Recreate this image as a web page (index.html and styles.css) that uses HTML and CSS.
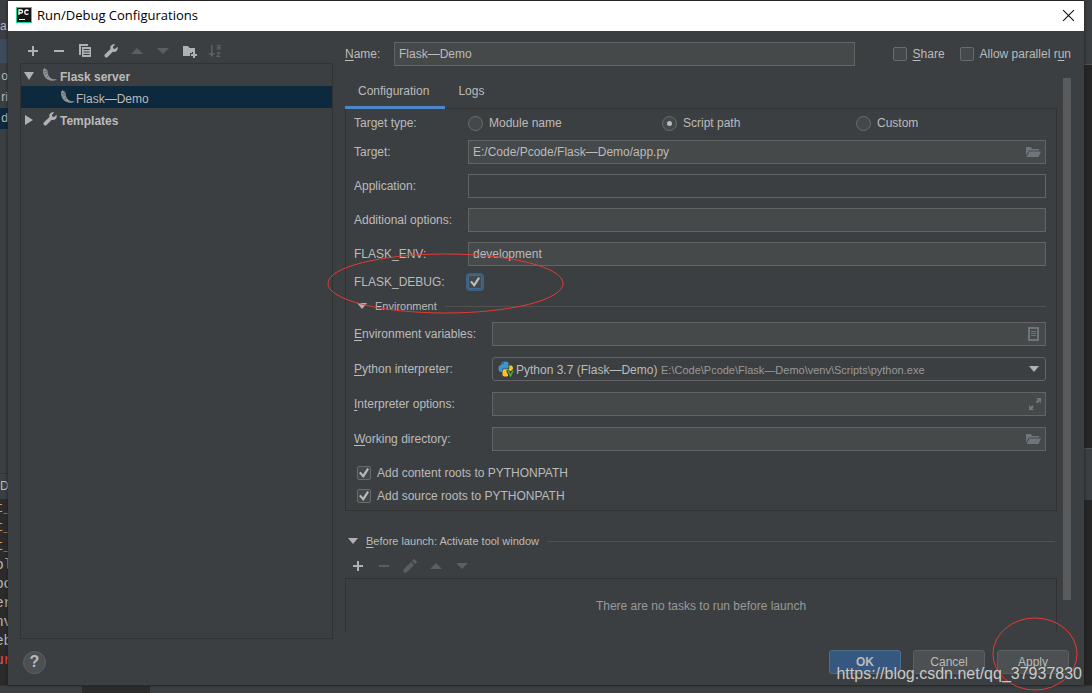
FILE: index.html
```html
<!DOCTYPE html>
<html lang="en">
<head>
<meta charset="utf-8">
<title>Run/Debug Configurations</title>
<link rel="stylesheet" href="styles.css">
</head>
<body>
<svg class="defs" aria-hidden="true">
  <defs>
    <symbol id="plus" viewBox="0 0 16 16"><path d="M7 3h2v4h4v2H9v4H7V9H3V7h4z" fill="currentColor"/></symbol>
    <symbol id="minus" viewBox="0 0 16 16"><path d="M3 7h10v2H3z" fill="currentColor"/></symbol>
    <symbol id="copy" viewBox="0 0 16 16"><path d="M2 1h9v2H4v9H2z" fill="currentColor"/><path fill-rule="evenodd" d="M5 4h9v10H5zM6.500 6v1h6V6zM6.500 8.500v1h6v-1zM6.500 11v1h6v-1z" fill="currentColor"/></symbol>
    <symbol id="wrench" viewBox="0 0 16 16"><path d="M14.400 3.700l-2.300 2.300-1.800-.4-.4-1.700 2.300-2.400c-1.500-.6-3-.2-4 .9-1 1-1.200 2.400-.7 3.700L2 11.300c-.7.700-.7 1.900 0 2.600.7.700 1.900.7 2.600 0L9.800 8.700c1.300.5 2.800.2 3.800-.8 1.200-1.100 1.500-2.800.8-4.200z" fill="currentColor"/></symbol>
    <symbol id="up" viewBox="0 0 16 16"><path d="M2 11l6-6 6 6z" fill="currentColor"/></symbol>
    <symbol id="down" viewBox="0 0 16 16"><path d="M2 5l6 6 6-6z" fill="currentColor"/></symbol>
    <symbol id="folder-plus" viewBox="0 0 16 16"><path d="M2 3h5l1.500 2H14v4h-3v1H9v3H2zM12 9h2v2h2v2h-2v2h-2v-2h-2v-2h2z" fill="currentColor"/></symbol>
    <symbol id="folder" viewBox="0 0 16 16"><path d="M1 3h5l1 2h7v1.500H4L1 11.500zM4.500 7.500H16L13.500 13H1.500z" fill="currentColor"/></symbol>
    <symbol id="horn" viewBox="0 0 16 16"><path d="M1.500 2C.6 4 1 7.500 3 10.200s6 4.300 9.500 3.300c1-.3 1.800-.5 2.300-1.300-2.300.4-4.800 0-6.500-1.500C6.300 9 5.300 6 5.500 3L4.300 3.500 4.500 1.500 3 2.200V1z" fill="#909395"/><path d="M2 5l2.600-.9M2.500 7.500l2.600-1.300M4.500 10.200l2-1.700" stroke="#3c3f41" stroke-width=".5" fill="none"/></symbol>
    <symbol id="pencil" viewBox="0 0 16 16"><path d="M1.500 14.500v-3L9 4l3 3-7.500 7.500zM10 3l1.700-1.700 1-.1 2.200 2.200-.1 1L13 6z" fill="currentColor"/></symbol>
    <symbol id="open" viewBox="0 0 10 6"><path d="M0 0h10L5 6z" fill="currentColor"/></symbol>
  </defs>
</svg>

<div class="backdrop" aria-hidden="true">
  <div class="strip strip-left">
    <div class="edge-toolbar">a</div>
    <div class="edge-tab"></div>
    <div class="edge-tree"><span>o</span><span>ri</span><span class="edge-selected">d</span></div>
    <div class="edge-run">D</div>
    <div class="edge-console"><span class="sand">t_</span><span class="sand">t_</span><span class="sand">t_</span><span>ol</span><span>oc</span><span>er</span><span>nv</span><span>eb</span><span class="error">ur</span></div>
  </div>
  <div class="strip strip-right">
    <div class="edge-bars"></div>
    <div class="edge-editor"></div>
    <div class="edge-head"></div>
    <div class="edge-output"></div>
  </div>
  <div class="status"><div class="status-tab"></div></div>
</div>

<div class="dialog" role="dialog" aria-labelledby="dialog-title">
  <header class="titlebar">
    <svg class="logo" viewBox="0 0 16 16"><rect width="16" height="16" fill="#21d789"/><rect x="1" y="1" width="14" height="14" fill="#151515"/><path d="M3 8V3h2q1.500 0 1.500 1.500T5 6H3.200M12.500 3.800Q11.800 3 10.700 3 8.800 3.100 8.800 5.200T10.700 7.400q1.100 0 1.800-.8" fill="none" stroke="#fff" stroke-width="1.300"/><path d="M3 12h6v1H3z" fill="#fff"/></svg>
    <h1 id="dialog-title">Run/Debug Configurations</h1>
    <button class="close" aria-label="Close"><svg viewBox="0 0 12 12"><path d="M1 1l10 10M11 1L1 11" stroke="#111" stroke-width="1"/></svg></button>
  </header>

  <main class="main">
    <section class="sidebar">
      <div class="toolbar">
        <button aria-label="Add"><svg><use href="#plus"/></svg></button>
        <button aria-label="Remove"><svg><use href="#minus"/></svg></button>
        <button aria-label="Copy"><svg><use href="#copy"/></svg></button>
        <button aria-label="Edit templates"><svg><use href="#wrench"/></svg></button>
        <button aria-label="Move up" disabled><svg><use href="#up"/></svg></button>
        <button aria-label="Move down" disabled><svg><use href="#down"/></svg></button>
        <button aria-label="New folder"><svg><use href="#folder-plus"/></svg></button>
        <button aria-label="Sort" disabled><svg viewBox="0 0 16 16"><path d="M4 2h1.500v8H8l-3.200 4L1.500 10H4z" fill="currentColor"/><path d="M10 2.600h3v4.200M13 6.200h-2.600V4.500H13M9.800 9.600h3L10 13.400h3.500" fill="none" stroke="currentColor" stroke-width="1.200"/></svg></button>
      </div>
      <ul class="tree">
        <li class="node"><svg class="twist" viewBox="0 0 10 10"><path d="M0 1h10L5 9z" fill="currentColor"/></svg><svg class="icon"><use href="#horn"/></svg><b>Flask server</b></li>
        <li class="node child selected"><svg class="icon"><use href="#horn"/></svg>Flask—Demo</li>
        <li class="node"><svg class="twist" viewBox="0 0 10 10"><path d="M1 0v10l8-5z" fill="currentColor"/></svg><svg class="icon"><use href="#wrench"/></svg><b>Templates</b></li>
      </ul>
    </section>

    <section class="detail">
      <div class="name-row">
        <label class="name-label" for="name"><u>N</u>ame:</label>
        <input class="field name-field" id="name" type="text" value="Flask—Demo">
        <label class="check share"><input type="checkbox"><span><u>S</u>hare</span></label>
        <label class="check"><input type="checkbox"><span>Allow parallel r<u>u</u>n</span></label>
      </div>

      <div class="scroller">
        <div class="content">
          <div class="tabs" role="tablist">
            <button class="tab active" role="tab" aria-selected="true">Configuration</button>
            <button class="tab" role="tab" aria-selected="false">Logs</button>
          </div>
          <div class="panel">
            <div class="rows">
              <div class="row type-row">
                <span>Target type:</span>
                <div class="radios">
                  <label class="radio"><input type="radio" name="type">Module name</label>
                  <label class="radio"><input type="radio" name="type" checked>Script path</label>
                  <label class="radio"><input type="radio" name="type">Custom</label>
                </div>
              </div>
              <div class="row"><label for="target">Target:</label><div class="field-wrap"><input class="field" id="target" type="text" value="E:/Code/Pcode/Flask—Demo/app.py"><svg class="field-icon"><use href="#folder"/></svg></div></div>
              <div class="row"><label for="application">Application:</label><input class="field plain" id="application" type="text"></div>
              <div class="row"><label for="additional">Additional options:</label><input class="field" id="additional" type="text"></div>
              <div class="row"><label for="env">FLASK_ENV:</label><input class="field" id="env" type="text" value="development"></div>
            </div>
            <div class="row debug-row"><label for="debug">FLASK_DEBUG:</label><span class="check"><input class="focused" id="debug" type="checkbox" checked></span></div>
            <h2 class="group env-group"><svg class="fold"><use href="#open"/></svg>Environment</h2>
            <div class="rows env-rows">
              <div class="row"><label for="vars"><u>E</u>nvironment variables:</label><div class="field-wrap"><input class="field" id="vars" type="text"><svg class="field-icon" viewBox="0 0 16 16"><path fill-rule="evenodd" d="M3 1h11v14H3zM5 3v10h7V3z" fill="currentColor"/><path d="M6 5.500h5M6 7.500h5M6 9.500h5" stroke="currentColor"/></svg></div></div>
              <div class="row"><label for="interpreter"><u>P</u>ython interpreter:</label>
                <div class="combo">
                  <svg class="icon" viewBox="0 0 16 16"><path d="M3.500 4V2.500Q3.500.5 7 .5t3.500 2V6Q10.500 7.500 9 7.500H5.500Q4 7.500 4 9v2H3Q.5 11 .5 7.500T3 4h4z" fill="#3f95c9"/><circle cx="5.300" cy="2.300" r=".7" fill="#3c3f41"/><path d="M11.300 4.500H13q2 .3 2 3.500v2l-3 0v2H10v3q-1 .5-2.500.5-3 0-3-2V10Q4.500 8.300 6 8.300h4q1.300 0 1.300-1.500z" fill="#fcc32c"/><path d="M9.500 9l3 6.500 3-6.500" fill="none" stroke="#3c3f41" stroke-width="3"/><path d="M10 9.500l2.500 5.500 2.500-5.500" fill="none" stroke="#4fae3b" stroke-width="1.400"/></svg>
                  <select id="interpreter"><option>Python 3.7 (Flask—Demo)</option></select>
                  <span class="path">E:\Code\Pcode\Flask—Demo\venv\Scripts\python.exe</span>
                  <svg class="fold"><use href="#open"/></svg>
                </div>
              </div>
              <div class="row"><label for="options"><u>I</u>nterpreter options:</label><div class="field-wrap"><input class="field" id="options" type="text"><svg class="field-icon" viewBox="0 0 16 16"><path d="M11 2h5v5l-1.600-1.600-2 2-1.600-1.600 2-2zM4 14h5l-1.600-1.600 1.500-1.500-1.700-1.700-1.500 1.500L4 9z" fill="currentColor"/></svg></div></div>
              <div class="row"><label for="workdir"><u>W</u>orking directory:</label><div class="field-wrap"><input class="field" id="workdir" type="text"><svg class="field-icon"><use href="#folder"/></svg></div></div>
            </div>
            <div class="roots">
              <label class="check"><input type="checkbox" checked>Add content roots to PYTHONPATH</label>
              <label class="check"><input type="checkbox" checked>Add source roots to PYTHONPATH</label>
            </div>
          </div>

          <h2 class="group launch-group"><svg class="fold"><use href="#open"/></svg><span><u>B</u>efore launch: Activate tool window</span></h2>
          <div class="toolbar launch-tools">
            <button aria-label="Add task"><svg><use href="#plus"/></svg></button>
            <button aria-label="Remove task" disabled><svg><use href="#minus"/></svg></button>
            <button aria-label="Edit task" disabled><svg><use href="#pencil"/></svg></button>
            <button aria-label="Move task up" disabled><svg><use href="#up"/></svg></button>
            <button aria-label="Move task down" disabled><svg><use href="#down"/></svg></button>
          </div>
          <div class="tasks">There are no tasks to run before launch</div>
        </div>
        <div class="scrollbar"><div class="thumb"></div></div>
      </div>
    </section>
  </main>

  <footer class="footer">
    <button class="help" aria-label="Help">?</button>
    <button class="btn primary">OK</button>
    <button class="btn">Cancel</button>
    <button class="btn">Apply</button>
  </footer>
</div>

<svg class="marks debug-mark" viewBox="0 0 237 61"><ellipse cx="118.500" cy="30.500" rx="117.500" ry="29.500"/></svg>
<svg class="marks apply-mark" viewBox="0 0 86 74"><ellipse cx="43" cy="37" rx="42" ry="36"/></svg>
<div class="watermark">https://blog.csdn.net/qq_37937830</div>
</body>
</html>
```
FILE: styles.css
```css
* { box-sizing: border-box; }

body {
  margin: 0;
  min-height: 100vh;
  position: relative;
  display: flex;
  overflow: hidden;
  background: #2b2b2b;
  color: #bbbbbb;
  font: 12px/16px "Liberation Sans", Arial, sans-serif;
}

button, input, select { font: inherit; color: inherit; margin: 0; }
button { border: 0; padding: 0; background: none; }
svg { display: block; flex: none; }
u { text-underline-offset: 2px; }
.defs { position: absolute; width: 0; height: 0; }
.icon { width: 16px; height: 16px; color: #afb1b3; }

/* Application window behind the dialog */
.backdrop { position: absolute; inset: 0; background: #2b2b2b; }
.strip { position: absolute; top: 0; bottom: 8px; width: 8px; overflow: hidden; display: flex; flex-direction: column; }
.strip-left { left: 0; background: #3c3f41; }
.strip-right { right: 0; background: #262626; }
.edge-toolbar { height: 39px; padding-top: 18px; }
.edge-tab { height: 24px; background: #3d4b5c; }
.edge-tree { flex: 1; padding-top: 3px; display: flex; flex-direction: column; line-height: 21px; }
.edge-tree span { display: flex; justify-content: flex-end; }
.edge-tree .edge-selected { background: #0d293e; }
.edge-run { height: 26px; padding-top: 4px; border-top: 1px solid #323232; }
.edge-console { height: 186px; margin-right: -4px; background: #2b2b2b; display: flex; flex-direction: column; font: 14px/19px "Liberation Mono", monospace; }
.edge-console span { display: flex; justify-content: flex-end; }
.sand { color: #c9a26d; }
.error { color: #ff4b3e; }
.edge-bars { height: 65px; background: #3c3f41; border-bottom: 1px solid #505050; }
.edge-editor { flex: 1; }
.edge-head { height: 52px; background: #3c3f41; border-top: 1px solid #505050; }
.edge-output { height: 185px; }
.status { position: absolute; left: 0; right: 0; bottom: 0; height: 8px; padding-left: 82px; background: #3c3f41; border-top: 1px solid #323232; }
.status-tab { width: 68px; height: 7px; background: #2b2b2b; }

/* Dialog */
.dialog { position: relative; flex: 1; margin: 1px 8px 8px; display: flex; flex-direction: column; background: #3c3f41; box-shadow: 0 0 3px #1c1c1c; }
.titlebar { height: 30px; padding: 0 9px 2px 8px; display: flex; align-items: center; background: #fff; color: #000; }
.logo { width: 16px; height: 16px; }
.titlebar h1 { flex: 1; margin: 0 0 0 5px; font: 13px/16px "Open Sans", sans-serif; }
.close svg { width: 13px; height: 13px; }
.main { flex: 1; padding: 0 13px 0 12px; display: grid; grid-template-columns: 313fr 726fr; gap: 12px; }

.sidebar { display: flex; flex-direction: column; }
.toolbar { padding: 12px 5px 4px; display: flex; gap: 10px; }
.toolbar button { width: 16px; height: 16px; color: #afb1b3; }
.toolbar button:disabled { color: #5c5e60; }
.toolbar svg { width: 16px; height: 16px; }

.tree { flex: 1; margin: 0; padding: 0; list-style: none; border: 1px solid #323232; }
.node { height: 22px; padding: 3px 3px 0; display: flex; align-items: center; }
.node .icon { margin: 0 2px 3px 8px; }
.node.child { padding-left: 31px; }
.node.child .icon { margin-right: 0; }
.node.selected { background: #0d293e; }
.twist { width: 10px; height: 10px; margin-bottom: 2px; color: #afb1b3; }

.detail { min-width: 0; display: flex; flex-direction: column; padding: 11px 0 6px; }
.name-row { display: flex; align-items: center; }
.name-label { width: 49px; }
.name-field { flex: 1; min-width: 0; }
.share { margin: 0 15px 0 38px; }

.field { width: 100%; height: 24px; padding: 0 4px 1px; border: 1px solid #646464; border-radius: 0; background: #45494a; outline: none; }
.field.plain { background: #3c3f41; }
.field-wrap { position: relative; }
.field-wrap .field { display: block; padding-right: 24px; }
.field-icon { position: absolute; top: 4px; right: 5px; width: 16px; height: 16px; color: #6e767b; }

.check { display: flex; align-items: center; gap: 6px; white-space: nowrap; }
.check input, .radio input { appearance: none; flex: none; display: grid; place-content: center; border: 1px solid #6b6b6b; background: #43494a; }
.check input { width: 14px; height: 14px; border-radius: 2px; }
.check input:checked::before { content: ""; width: 10px; height: 10px; background: #bbbbbb; clip-path: polygon(0 50%, 18% 38%, 40% 65%, 82% 0, 100% 12%, 44% 100%); }
.check .focused { border-color: #43688c; box-shadow: 0 0 0 2px #3d6185; }
.radio { display: flex; align-items: center; gap: 6px; }
.radio input { width: 15px; height: 15px; border-radius: 50%; }
.radio input:checked::before { content: ""; width: 5px; height: 5px; border-radius: 50%; background: #bbbbbb; }

.scroller { flex: 1; margin-top: 10px; display: flex; gap: 6px; }
.content { flex: 1; min-width: 0; display: flex; flex-direction: column; }
.scrollbar { width: 8px; padding-top: 2px; }
.thumb { height: 94%; background: #595b5d; }

.tabs { position: relative; z-index: 1; display: flex; margin-bottom: -1px; }
.tab { height: 33px; padding: 0 16px 0 13px; border-bottom: 3px solid transparent; }
.tab.active { border-color: #4a88c7; }
.panel { padding: 6px 10px 6px 8px; border: 1px solid #323232; }
.rows { display: grid; gap: 10px; }
.row { display: grid; grid-template-columns: 114px 1fr; align-items: center; }
.type-row { height: 15px; }
.radios { display: grid; grid-template-columns: repeat(3, 1fr); gap: 4px; }
.debug-row { height: 20px; margin-top: 6px; }
.group { margin: 0; display: flex; align-items: center; gap: 8px; font-size: 11px; font-weight: normal; line-height: 12px; }
.group::after { content: ""; flex: 1; height: 1px; background: #515151; }
.fold { width: 10px; height: 6px; color: #afb1b3; }
.env-group { margin: 8px 0 10px; padding-left: 3px; }
.env-rows { gap: 11px; }
.env-rows .row { grid-template-columns: 138px 1fr; }

.combo { min-width: 0; height: 24px; padding: 0 6px 0 5px; display: flex; align-items: center; border: 1px solid #646464; border-radius: 3px; }
.combo select { appearance: none; border: 0; padding: 2px 3px 0 2px; background: transparent; }
.path { flex: 1; padding-top: 2px; font-size: 11px; color: #999999; }
.roots { margin-top: 14px; padding-left: 3px; display: grid; gap: 7px; }

.launch-group { margin: 24px 2px 0 3px; }
.launch-tools { padding-top: 11px; }
.tasks { flex: 1; display: grid; place-items: center; border: 1px solid #323232; border-bottom: 0; color: #999999; }

.footer { padding: 11px 15px; display: flex; align-items: center; gap: 12px; }
.help { width: 23px; height: 23px; margin-right: auto; border: 1px solid #5e6060; border-radius: 50%; background: #4c5052; font-size: 16px; font-weight: bold; }
.btn { width: 72px; height: 24px; border: 1px solid #5e6060; border-radius: 3px; background: #4c5052; }
.btn.primary { border-color: #4c708c; background: #365880; font-weight: bold; }

/* Annotations drawn over the window */
.marks { position: absolute; fill: none; stroke: #e53935; stroke-width: 1; }
.debug-mark { left: 327px; top: 253px; width: 237px; height: 61px; }
.apply-mark { right: 14px; bottom: 2px; width: 86px; height: 74px; }
.watermark { position: absolute; right: 10px; bottom: 9px; font-size: 16px; line-height: 20px; color: #c8cacb; text-shadow: 1px 1px 1px #444444; }
```
